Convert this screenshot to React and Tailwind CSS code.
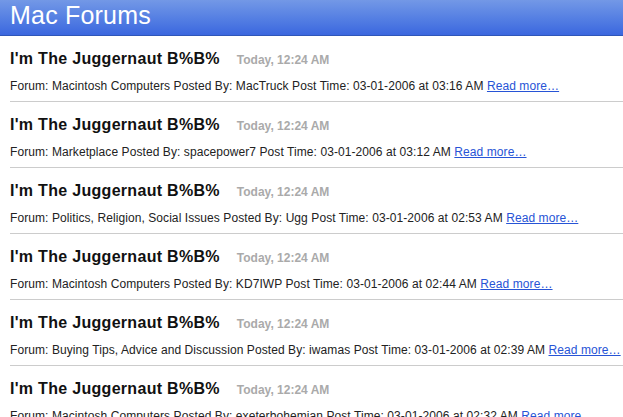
import React from "react";

const posts = [
  { forum: "Macintosh Computers", by: "MacTruck", time: "03-01-2006 at 03:16 AM" },
  { forum: "Marketplace", by: "spacepower7", time: "03-01-2006 at 03:12 AM" },
  { forum: "Politics, Religion, Social Issues", by: "Ugg", time: "03-01-2006 at 02:53 AM" },
  { forum: "Macintosh Computers", by: "KD7IWP", time: "03-01-2006 at 02:44 AM" },
  { forum: "Buying Tips, Advice and Discussion", by: "iwamas", time: "03-01-2006 at 02:39 AM" },
  { forum: "Macintosh Computers", by: "exeterbohemian", time: "03-01-2006 at 02:32 AM" },
];

const App = () => {
  return (
    <div className="w-[623px] h-[417px] overflow-hidden bg-white font-['Liberation_Sans',Arial,sans-serif]">
      <div className="h-[36px] bg-gradient-to-b from-[#7398e6] to-[#3b67df] border-b border-[#2f56b8] pl-[10px] flex items-center">
        <h1 className="text-[25px] leading-none text-white -mt-[4px] tracking-[0.2px]">Mac Forums</h1>
      </div>

      {posts.map((post, index) => (
        <div key={index} className="ml-[10px] pt-[13px] pb-[7px] border-b border-[#cccccc]">
          <div className="flex items-baseline h-[20px] leading-[20px]">
            <span className="text-[16px] font-bold tracking-[0.3px] text-[#111]">
              I'm The Juggernaut B%B%
            </span>
            <span className="ml-[17px] text-[12px] font-bold text-[#aaaaaa]">Today, 12:24 AM</span>
          </div>
          <p className="mt-[9px] text-[12px] leading-[16px] tracking-[0.08px] text-[#222] whitespace-nowrap">
            Forum: {post.forum} Posted By: {post.by} Post Time: {post.time}{" "}
            <a href="#" className="text-[#2754d6] underline">Read more…</a>
          </p>
        </div>
      ))}
    </div>
  );
};

export default App;
